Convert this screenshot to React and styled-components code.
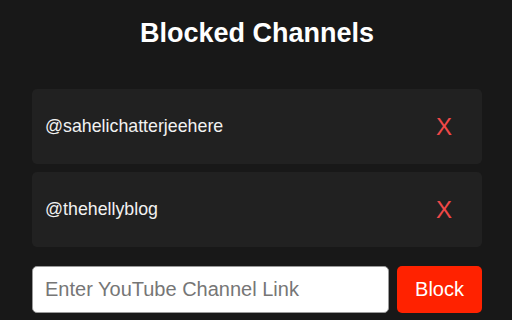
import React, { useState } from "react";
import styled, { createGlobalStyle } from "styled-components";

const GlobalStyle = createGlobalStyle`
  html, body {
    margin: 0;
    padding: 0;
    background: #181818;
  }
  body {
    font-family: "Liberation Sans", Arial, sans-serif;
    color: #fff;
  }
`;

const Page = styled.div`
  width: 512px;
  height: 320px;
  box-sizing: border-box;
  padding: 0 30px 0 32px;
  display: flex;
  flex-direction: column;
  overflow: hidden;
`;

const Title = styled.h1`
  margin: 16px 0 0;
  text-align: center;
  font-size: 27px;
  font-weight: 700;
  line-height: 34px;
`;

const List = styled.div`
  margin-top: 39px;
  display: flex;
  flex-direction: column;
  gap: 8px;
`;

const Card = styled.div`
  height: 75px;
  box-sizing: border-box;
  background: #212121;
  border-radius: 5px;
  padding: 0 30px 0 13px;
  display: flex;
  align-items: center;
  justify-content: space-between;
`;

const Handle = styled.span`
  font-size: 17.8px;
  color: #f2f2f2;
`;

const RemoveButton = styled.button`
  border: none;
  background: none;
  padding: 0;
  color: #f04848;
  font-family: "Liberation Sans", Arial, sans-serif;
  font-size: 24px;
  line-height: 1;
  cursor: pointer;
`;

const Form = styled.div`
  margin-top: 19px;
  display: flex;
  gap: 8px;
`;

const Input = styled.input`
  flex: 1;
  height: 47px;
  box-sizing: border-box;
  border: 1px solid #9a9a9a;
  border-radius: 5px;
  padding: 0 12px;
  font-family: "Liberation Sans", Arial, sans-serif;
  font-size: 20px;
  color: #222;
  outline: none;
  &::placeholder {
    color: #767676;
  }
`;

const BlockButton = styled.button`
  width: 85px;
  height: 47px;
  border: none;
  border-radius: 5px;
  background: #ff2200;
  color: #fff;
  font-family: "Liberation Sans", Arial, sans-serif;
  font-size: 20px;
  cursor: pointer;
`;

export default function App() {
  const [channels, setChannels] = useState([
    "@sahelichatterjeehere",
    "@thehellyblog",
  ]);
  const [value, setValue] = useState("");

  return (
    <>
      <GlobalStyle />
      <Page>
        <Title>Blocked Channels</Title>
        <List>
          {channels.map((c) => (
            <Card key={c}>
              <Handle>{c}</Handle>
              <RemoveButton
                onClick={() => setChannels(channels.filter((x) => x !== c))}
              >
                X
              </RemoveButton>
            </Card>
          ))}
        </List>
        <Form>
          <Input
            placeholder="Enter YouTube Channel Link"
            value={value}
            onChange={(e) => setValue(e.target.value)}
          />
          <BlockButton
            onClick={() => {
              if (value.trim()) {
                setChannels([...channels, value.trim()]);
                setValue("");
              }
            }}
          >
            Block
          </BlockButton>
        </Form>
      </Page>
    </>
  );
}
